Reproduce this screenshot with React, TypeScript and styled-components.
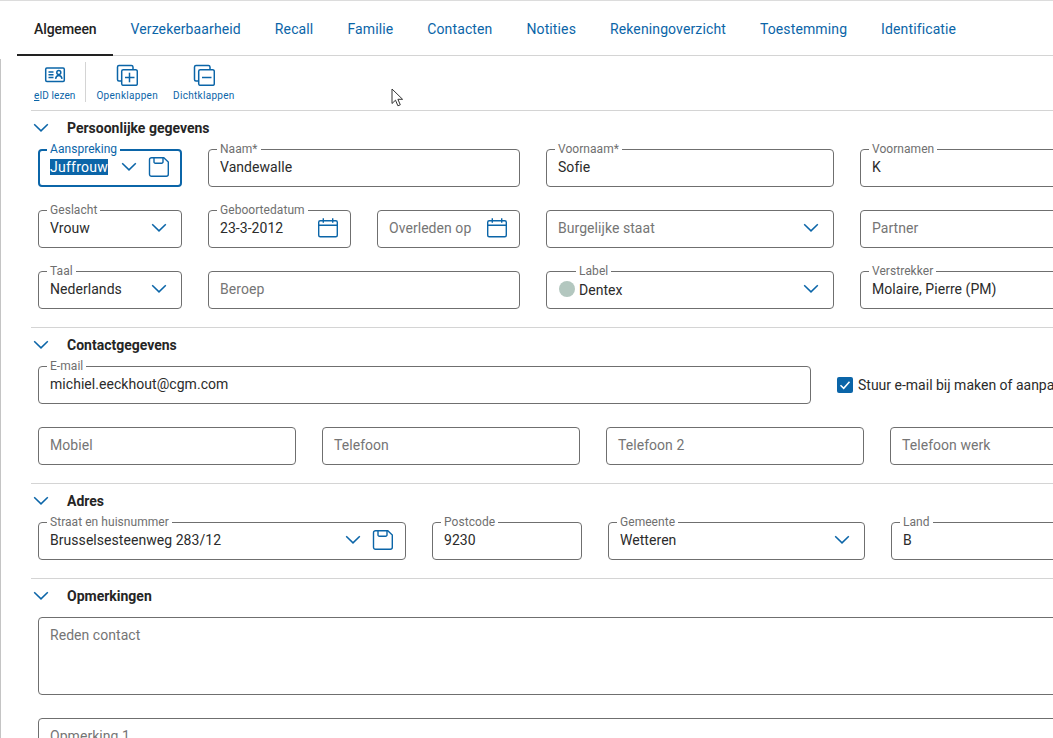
import { ReactNode } from 'react';
import styled, { createGlobalStyle } from 'styled-components';

const BLUE = '#0b65a8';
const LINE = '#d4d4d4';
const BORDER = '#6f6f6f';

const GlobalStyle = createGlobalStyle`
  html, body {
    margin: 0;
    padding: 0;
    background: #fff;
    overflow: hidden;
  }
  * {
    box-sizing: border-box;
  }
`;

const Chevron = () => (
  <svg width="16" height="16" viewBox="0 0 16 16" fill="none">
    <path d="M1.200 4.200 8 10.900l6.800-6.700" stroke={BLUE} strokeWidth="1.500" />
  </svg>
);

const SaveIcon = () => (
  <svg width="22" height="22" viewBox="0 0 22 22" fill="none" stroke={BLUE} strokeWidth="1.400">
    <path d="M3.500 1.700h12.300l4.500 4.300v12.300a2 2 0 0 1-2 2H3.500a2 2 0 0 1-2-2V3.700a2 2 0 0 1 2-2Z" />
    <path d="M6 1.700v4.200a1.300 1.300 0 0 0 1.300 1.300h6.400a1.300 1.300 0 0 0 1.300-1.300V1.700" />
  </svg>
);

const CalendarIcon = () => (
  <svg width="22" height="22" viewBox="0 0 22 22" fill="none" stroke={BLUE} strokeWidth="1.400">
    <rect x="1.700" y="3.700" width="18.600" height="16" rx="1.500" />
    <path d="M1.700 8.300h18.600M6.300 1.300v4.400M15.700 1.300v4.400" />
  </svg>
);

const CardIcon = () => (
  <svg width="22" height="18" viewBox="0 0 22 18" fill="none" stroke={BLUE} strokeWidth="1.500">
    <rect x="1.700" y="2" width="18.600" height="13.400" rx="1.200" />
    <path d="M4.500 6h5M4.500 8.800h5M4.500 11.600h5" />
    <circle cx="14.800" cy="6.600" r="2" />
    <path d="M11.600 12.800c.3-2.200 1.600-3.300 3.200-3.300s2.900 1.100 3.200 3.300" />
  </svg>
);

const CollapseIcon = ({ plus }: { plus?: boolean }) => (
  <svg width="22" height="22" viewBox="0 0 22 22" fill="none" stroke={BLUE} strokeWidth="1.500">
    <path d="M5.700 17H3a1.600 1.600 0 0 1-1.500-1.600V3A1.600 1.600 0 0 1 3 1.500h12.400A1.600 1.600 0 0 1 17 3v2.700" />
    <rect x="5.700" y="5.700" width="15.600" height="15.600" rx="1.600" />
    <path d="M9 13.500h9.500" />
    {plus && <path d="M13.500 8.700v9.600" />}
  </svg>
);

const Wrapper = styled.div`
  width: 1053px;
  height: 738px;
  overflow: hidden;
  position: relative;
  border-top: 1px solid #dcdcdc;
  font-family: Roboto, 'Liberation Sans', sans-serif;
  font-size: 14px;
  color: #2b2b2b;
`;
const TabBar = styled.nav`
  display: flex;
  height: 55px;
  margin-left: 17px;
  border-bottom: 1px solid ${LINE};
`;
const Tab = styled.div<{ $active?: boolean }>`
  display: flex;
  align-items: center;
  height: 55px;
  padding: 2px 17px 0;
  font-weight: ${({ $active }) => ($active ? 500 : 400)};
  letter-spacing: ${({ $active }) => ($active ? '-0.1px' : '0.12px')};
  color: ${({ $active }) => ($active ? '#222' : BLUE)};
  border-bottom: 2px solid ${({ $active }) => ($active ? '#222' : 'transparent')};
`;
const Body = styled.div`
  margin-top: 3px;
  border-left: 1px solid #c4c4c4;
  height: 700px;
  padding-left: 30px;
`;
const Toolbar = styled.div`
  display: flex;
  height: 51px;
  margin-left: -30px;
  padding-left: 28px;
`;
const ToolButton = styled.div<{ $tight?: boolean }>`
  display: flex;
  flex-direction: column;
  align-items: center;
  padding: 4px 5px 0;
  height: 43px;
  font-size: 10px;
  letter-spacing: ${({ $tight }) => ($tight ? '0.1px' : '0.3px')};
  color: ${BLUE};
`;
const ToolIcon = styled.span`
  display: flex;
  align-items: center;
  justify-content: center;
  height: 24px;
  margin-bottom: 3px;
`;
const ToolDivider = styled.span`
  width: 1px;
  height: 40px;
  margin: 3px 5px 0 5px;
  background: ${LINE};
`;
const ToolGroup = styled.div`
  display: flex;
  gap: 5px;
`;
const Section = styled.section`
  border-top: 1px solid ${LINE};
  padding-bottom: 18px;
`;
const SectionHeader = styled.h2`
  display: flex;
  align-items: center;
  gap: 18px;
  height: 17px;
  margin: 8px 0 13px 2px;
  font-size: 14px;
  font-weight: 700;
  color: #252525;
`;
const Rows = styled.div`
  display: flex;
  flex-direction: column;
  gap: 23px;
  padding-left: 7px;
`;
const Row = styled.div`
  display: flex;
  gap: 26px;
  align-items: center;
  width: 1200px;
`;
const Stack = styled.div`
  display: flex;
  gap: 26px;
`;
const FieldBox = styled.div<{ $width: number; $height: number; $focused?: boolean }>`
  position: relative;
  display: flex;
  align-items: ${({ $height }) => ($height > 38 ? 'flex-start' : 'center')};
  flex: none;
  gap: 6px;
  width: ${({ $width }) => $width}px;
  height: ${({ $height }) => $height}px;
  padding: ${({ $height, $focused }) => ($height > 38 ? '9px 11px' : $focused ? '0 10px 2px' : '0 11px 2px')};
  border: ${({ $focused }) => ($focused ? `2px solid ${BLUE}` : `1px solid ${BORDER}`)};
  border-radius: 4px;
  background: #fff;
`;
const FieldLabel = styled.label<{ $focused?: boolean; $offset?: number }>`
  position: absolute;
  top: ${({ $focused }) => ($focused ? '-9px' : '-8px')};
  left: ${({ $offset, $focused }) => ($offset ?? 8) - ($focused ? 1 : 0)}px;
  padding: 0 3px;
  background: #fff;
  font-size: 12px;
  line-height: 14px;
  letter-spacing: 0.05px;
  color: ${({ $focused }) => ($focused ? BLUE : '#6f6f6f')};
`;
const FieldValue = styled.span<{ $muted?: boolean; $nudged?: boolean }>`
  flex: 1;
  min-width: 0;
  white-space: nowrap;
  letter-spacing: 0.05px;
  padding-top: ${({ $nudged }) => ($nudged ? '2px' : '0')};
  color: ${({ $muted }) => ($muted ? '#757575' : '#2b2b2b')};
`;
const Selected = styled.span`
  background: ${BLUE};
  color: #fff;
  letter-spacing: 0.25px;
`;
const Arrow = styled.span`
  display: flex;
  margin-right: 3px;
`;
const SaveArrow = styled.span`
  display: flex;
  margin-right: 5px;
`;
const Dot = styled.span`
  width: 16px;
  height: 16px;
  flex: none;
  margin: 0 -2px 0 1px;
  border-radius: 50%;
  background: #b3c7bf;
`;
const CheckRow = styled.label`
  display: flex;
  align-items: center;
  gap: 5px;
  white-space: nowrap;
  color: #2b2b2b;
`;
const CheckBox = styled.span`
  display: flex;
  align-items: center;
  justify-content: center;
  width: 16px;
  height: 16px;
  border-radius: 2px;
  background: ${BLUE};
`;
const Pointer = styled.svg`
  position: absolute;
  left: 391px;
  top: 87px;
`;

type FieldProps = {
  width: number;
  height?: number;
  label?: string;
  labelOffset?: number;
  value?: ReactNode;
  placeholder?: string;
  focused?: boolean;
  children?: ReactNode;
  before?: ReactNode;
};

const Field = ({ width, height = 38, label, labelOffset, value, placeholder, focused, children, before }: FieldProps) => (
  <FieldBox $width={width} $height={height} $focused={focused}>
    {label && (
      <FieldLabel $focused={focused} $offset={labelOffset}>
        {label}
      </FieldLabel>
    )}
    {before}
    <FieldValue $muted={!value} $nudged={!!before}>
      {value ?? placeholder}
    </FieldValue>
    {children}
  </FieldBox>
);

const SelectArrow = () => (
  <Arrow>
    <Chevron />
  </Arrow>
);

const SaveSelect = () => (
  <>
    <SaveArrow>
      <Chevron />
    </SaveArrow>
    <SaveIcon />
  </>
);

const TABS = ['Algemeen', 'Verzekerbaarheid', 'Recall', 'Familie', 'Contacten', 'Notities', 'Rekeningoverzicht', 'Toestemming', 'Identificatie'];

export default function App() {
  return (
    <Wrapper>
      <GlobalStyle />
      <TabBar>
        {TABS.map((tab, index) => (
          <Tab key={tab} $active={index === 0}>
            {tab}
          </Tab>
        ))}
      </TabBar>
      <Body>
        <Toolbar>
          <ToolButton $tight>
            <ToolIcon>
              <CardIcon />
            </ToolIcon>
            <span>
              <u>e</u>ID lezen
            </span>
          </ToolButton>
          <ToolDivider />
          <ToolGroup>
            <ToolButton>
              <ToolIcon>
                <CollapseIcon plus />
              </ToolIcon>
              Openklappen
            </ToolButton>
            <ToolButton>
              <ToolIcon>
                <CollapseIcon />
              </ToolIcon>
              Dichtklappen
            </ToolButton>
          </ToolGroup>
        </Toolbar>

        <Section>
          <SectionHeader>
            <Chevron />
            Persoonlijke gegevens
          </SectionHeader>
          <Rows>
            <Row>
              <Field width={144} label="Aanspreking" focused value={<Selected>Juffrouw</Selected>}>
                <SaveSelect />
              </Field>
              <Field width={312} label="Naam*" value="Vandewalle" />
              <Field width={288} label="Voornaam*" value="Sofie" />
              <Field width={300} label="Voornamen" value="K" />
            </Row>
            <Row>
              <Field width={144} label="Geslacht" value="Vrouw">
                <SelectArrow />
              </Field>
              <Stack>
                <Field width={143} label="Geboortedatum" value="23-3-2012">
                  <CalendarIcon />
                </Field>
                <Field width={143} placeholder="Overleden op">
                  <CalendarIcon />
                </Field>
              </Stack>
              <Field width={288} placeholder="Burgelijke staat">
                <SelectArrow />
              </Field>
              <Field width={300} placeholder="Partner" />
            </Row>
            <Row>
              <Field width={144} label="Taal" value="Nederlands">
                <SelectArrow />
              </Field>
              <Field width={312} placeholder="Beroep" />
              <Field width={288} label="Label" labelOffset={29} value="Dentex" before={<Dot />}>
                <SelectArrow />
              </Field>
              <Field width={300} label="Verstrekker" value="Molaire, Pierre (PM)" />
            </Row>
          </Rows>
        </Section>

        <Section>
          <SectionHeader>
            <Chevron />
            Contactgegevens
          </SectionHeader>
          <Rows>
            <Row>
              <Field width={773} label="E-mail" value="michiel.eeckhout@cgm.com" />
              <CheckRow>
                <CheckBox>
                  <svg width="12" height="12" viewBox="0 0 12 12" fill="none">
                    <path d="M1.500 6.200 4.700 9.300 10.500 2.700" stroke="#fff" strokeWidth="1.500" />
                  </svg>
                </CheckBox>
                Stuur e-mail bij maken of aanpassen
              </CheckRow>
            </Row>
            <Row>
              <Field width={258} placeholder="Mobiel" />
              <Field width={258} placeholder="Telefoon" />
              <Field width={258} placeholder="Telefoon 2" />
              <Field width={258} placeholder="Telefoon werk" />
            </Row>
          </Rows>
        </Section>

        <Section>
          <SectionHeader>
            <Chevron />
            Adres
          </SectionHeader>
          <Rows>
            <Row>
              <Field width={368} label="Straat en huisnummer" value="Brusselsesteenweg 283/12">
                <SaveSelect />
              </Field>
              <Field width={150} label="Postcode" value="9230" />
              <Field width={257} label="Gemeente" value="Wetteren">
                <SelectArrow />
              </Field>
              <Field width={300} label="Land" value="B" />
            </Row>
          </Rows>
        </Section>

        <Section>
          <SectionHeader>
            <Chevron />
            Opmerkingen
          </SectionHeader>
          <Rows>
            <Field width={1100} height={78} placeholder="Reden contact" />
            <Field width={1100} height={78} placeholder="Opmerking 1" />
          </Rows>
        </Section>
      </Body>
      <Pointer width="13" height="20" viewBox="0 0 13 20">
        <path d="M1 1v14.500l3.500-3.300 2.400 5.600 2.400-1-2.400-5.500h4.700Z" fill="#fff" stroke="#333" strokeWidth="1" />
      </Pointer>
    </Wrapper>
  );
}
